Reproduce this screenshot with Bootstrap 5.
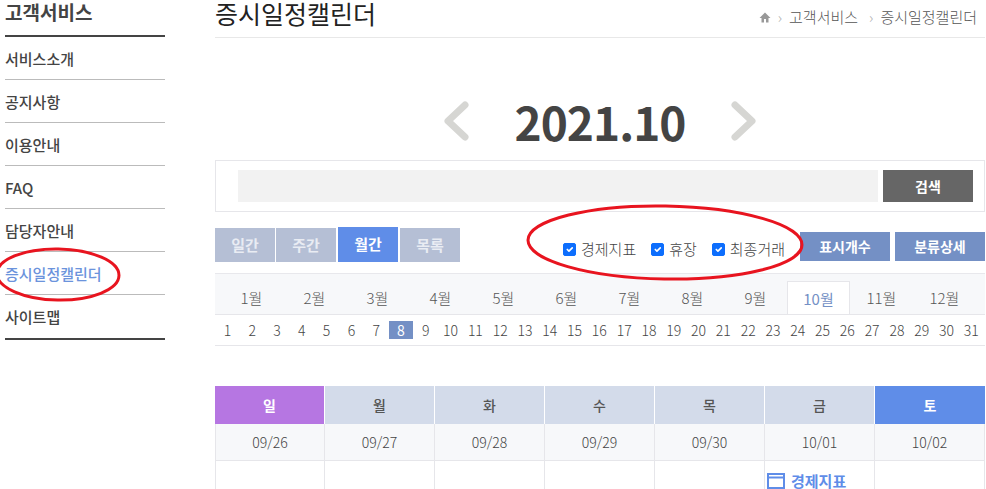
<!DOCTYPE html>
<html lang="ko">
<head>
<meta charset="UTF-8" />
<meta name="viewport" content="width=device-width, initial-scale=1.0"/>
<title>증시일정캘린더</title>
<link href="https://cdn.jsdelivr.net/npm/bootstrap@5.3.3/dist/css/bootstrap.min.css" rel="stylesheet">
<style>
    html, body { height: 489px; overflow: hidden; }
    body {
    background: #fff;
    color: #444;
    font-family: "Noto Sans CJK KR", "Noto Sans", sans-serif;
    position: relative;
    }
    .page-wrap { width: 986px; }
    .side-col { width: 160px; margin-left: 5px; margin-right: 50px; flex: none; }
    .main-col { width: 770px; flex: none; }
    .side-title { height: 37px; border-bottom: 2px solid #444; font-size: 19px; font-weight: 700; line-height: 23px; color: #444; margin: 0; }
    .side-list { border-bottom: 2px solid #444; border-radius: 0; }
    .side-list .list-group-item { height: 43px; padding: 0; line-height: 43px; font-size: 15px; font-weight: 500; color: #444; border: 0; border-bottom: 1px solid #bbb; background: none; border-radius: 0; }
    .side-list .list-group-item:last-child { border-bottom: 0; }
    .side-list .list-group-item.is-on { color: #6b93dc; }
    .title-bar { height: 38px; border-bottom: 1px solid #e8e8e8; }
    .title-bar h2 { font-size: 25px; font-weight: 400; color: #222; line-height: 27px; margin: 0; }
    .crumbs { font-size: 15px; font-weight: 300; color: #555; height: 34px; padding-right: 8px; gap: 7px; }
    .crumbs .crumb-sep { color: #aaa; }
    .year-row { height: 122px; padding-top: 53px; gap: 45px; }
    .year-row span { font-size: 46px; font-weight: 700; line-height: 60px; color: #444; width: 172px; text-align: center; letter-spacing: -1px; }
    .year-row svg { margin-top: 9px; }
    .search-box { height: 52px; border: 1px solid #e6e6ea; padding: 9px 11px 0 22px; gap: 5px; }
    .search-input { width: 640px; height: 32px; background: #f2f2f2; border: 0; border-radius: 0; }
    .search-btn { width: 90px; height: 32px; background: #666; color: #fff; font-size: 14px; font-weight: 700; border: 0; border-radius: 0; padding: 0; }
    .tool-row { height: 61px; padding-top: 16px; }
    .view-tabs { gap: 1px; }
    .view-btn { width: 60px; height: 34px; background: #b5bfd5; color: #e9ecf3; font-size: 15px; font-weight: 700; border: 0; border-radius: 0; padding: 0; }
    .view-btn.is-on { background: #5f8de8; color: #fff; margin: -1px 1px 0; height: 35px; }
    .chk-row { font-size: 15px; font-weight: 300; color: #444; margin-right: 10px; gap: 15px; height: 41px; }
    .chk-row .form-check { margin: 0; padding-left: 18px; min-height: 0; line-height: 20px; }
    .chk-row .form-check-input { width: 13px; height: 13px; margin: 4px 0 0 -18px; border-radius: 2px; }
    .opt-btn { width: 90px; height: 29px; background: #7490c5; color: #fff; font-size: 14px; font-weight: 700; border: 0; border-radius: 0; padding: 0; margin-top: 4px; margin-left: 5px; }
    .month-row { height: 42px; background: #f7f8fa; border-top: 1px solid #e8e8ec; border-bottom: 1px solid #e6e6ea; margin: 0; padding-left: 5px; flex-wrap: nowrap; }
    .month-row .nav-item { width: 63px; flex: none; text-align: center; }
    .month-row .nav-link { height: 33px; margin-top: 7px; padding: 0; line-height: 33px; font-size: 15px; font-weight: 300; color: #555; border: 0; border-radius: 0; background: none; }
    .month-row .nav-link.is-on { width: 63px; background: #fff; color: #7490c5; font-weight: 400; border: 1px solid #e6e6ea; border-bottom: 0; }
    .day-row { height: 31px; border-bottom: 1px solid #e6e6ea; font-size: 14px; font-weight: 300; color: #444; }
    .day-row span { width: 24.8px; height: 18px; margin-top: 6px; text-align: center; line-height: 18px; flex: none; }
    .day-row span.is-on { background: #7490c5; color: #fff; font-weight: 400; }
    .cal-table { margin: 40px 0 0; table-layout: fixed; width: 770px; border-collapse: separate; border-spacing: 0; }
    .cal-table th { height: 38px; padding: 0; vertical-align: middle; text-align: center; font-size: 14px; font-weight: 500; background: #d3dbea; color: #555; border: 0; border-right: 1px solid #fff; }
    .cal-table th:first-child { background: #b676e2; color: #fff; font-weight: 700; }
    .cal-table th:last-child { background: #5f8de8; color: #fff; font-weight: 700; border-right: 0; }
    .cal-table td { padding: 0; text-align: center; border: 0; border-right: 1px solid #e6e6ea; font-size: 14px; font-weight: 300; color: #444; }
    .cal-table td:first-child { border-left: 1px solid #e6e6ea; }
    .cal-table .date-row td { height: 37px; background: #f7f8fa; vertical-align: middle; border-bottom: 1px solid #e6e6ea; }
    .cal-table .event-row td { height: 28px; vertical-align: top; padding-top: 12px; }
    .event-tag { color: #5f8de8; font-size: 15px; font-weight: 700; padding-left: 2px; line-height: 16px; gap: 6px; }
    .red-mark { position: absolute; left: 0; top: 0; pointer-events: none; }
</style>
</head>
<body>
<div class="page-wrap d-flex">
    <aside class="side-col">
        <h5 class="side-title">고객서비스</h5>
        <div class="list-group side-list">
            <a href="#" class="list-group-item">서비스소개</a>
            <a href="#" class="list-group-item">공지사항</a>
            <a href="#" class="list-group-item">이용안내</a>
            <a href="#" class="list-group-item">FAQ</a>
            <a href="#" class="list-group-item">담당자안내</a>
            <a href="#" class="list-group-item is-on">증시일정캘린더</a>
            <a href="#" class="list-group-item">사이트맵</a>
        </div>
    </aside>

    <main class="main-col">
        <div class="title-bar d-flex justify-content-between">
            <h2>증시일정캘린더</h2>
            <div class="crumbs d-flex align-items-center">
                <svg width="12" height="11" viewBox="0 0 12 11"><path d="M6 0.5 0.5 6H2.5V10.5H5V7H7V10.5H9.5V6H11.5Z" fill="#999"/></svg>
                <span class="crumb-sep">›</span>
                <span>고객서비스</span>
                <span class="crumb-sep ms-1">›</span>
                <span>증시일정캘린더</span>
            </div>
        </div>

        <div class="year-row d-flex justify-content-center align-items-start">
            <svg width="26" height="42" viewBox="0 0 26 42"><path d="M22 5 5 21 22 37" fill="none" stroke="#d6d6d3" stroke-width="7" stroke-linecap="round" stroke-linejoin="round"/></svg>
            <span>2021.10</span>
            <svg width="26" height="42" viewBox="0 0 26 42"><path d="M4 5 21 21 4 37" fill="none" stroke="#d6d6d3" stroke-width="7" stroke-linecap="round" stroke-linejoin="round"/></svg>
        </div>

        <div class="search-box d-flex">
            <input class="form-control search-input" type="text">
            <button class="btn search-btn">검색</button>
        </div>

        <div class="tool-row d-flex justify-content-between">
            <div class="view-tabs d-flex">
                <button class="btn view-btn">일간</button>
                <button class="btn view-btn">주간</button>
                <button class="btn view-btn is-on">월간</button>
                <button class="btn view-btn">목록</button>
            </div>
            <div class="d-flex">
                <div class="chk-row d-flex align-items-center">
                    <div class="form-check"><input class="form-check-input" type="checkbox" id="c1" checked><label class="form-check-label" for="c1">경제지표</label></div>
                    <div class="form-check"><input class="form-check-input" type="checkbox" id="c2" checked><label class="form-check-label" for="c2">휴장</label></div>
                    <div class="form-check"><input class="form-check-input" type="checkbox" id="c3" checked><label class="form-check-label" for="c3">최종거래</label></div>
                </div>
                <button class="btn opt-btn">표시개수</button>
                <button class="btn opt-btn">분류상세</button>
            </div>
        </div>

        <ul class="nav month-row" id="months"></ul>
        <div class="day-row d-flex" id="days"></div>

        <table class="table cal-table">
            <thead>
                <tr><th>일</th><th>월</th><th>화</th><th>수</th><th>목</th><th>금</th><th>토</th></tr>
            </thead>
            <tbody>
                <tr class="date-row"><td>09/26</td><td>09/27</td><td>09/28</td><td>09/29</td><td>09/30</td><td>10/01</td><td>10/02</td></tr>
                <tr class="event-row">
                    <td></td><td></td><td></td><td></td><td></td>
                    <td>
                        <div class="event-tag d-flex align-items-center">
                            <svg width="18" height="16" viewBox="0 0 18 16"><rect x="1" y="1" width="16" height="14" fill="none" stroke="#5f8de8" stroke-width="2"/><path d="M1 4.5H17" stroke="#5f8de8" stroke-width="2"/><path d="M4 2.5H6M8 2.5H10M12 2.5H14" stroke="#fff" stroke-width="1"/></svg>
                            <span>경제지표</span>
                        </div>
                    </td>
                    <td></td>
                </tr>
            </tbody>
        </table>
    </main>
</div>

<svg class="red-mark" width="986" height="489" viewBox="0 0 986 489">
    <ellipse cx="58" cy="274.5" rx="61" ry="25.5" fill="none" stroke="#e8141f" stroke-width="3" transform="rotate(1 58 274)"/>
    <ellipse cx="665" cy="242.5" rx="137" ry="36.5" fill="none" stroke="#e8141f" stroke-width="3" transform="rotate(1 665 242)"/>
</svg>

<script>
    const months = document.getElementById('months');
    for (let m = 1; m <= 12; m++) {
        const on = m === 10 ? ' is-on' : '';
        months.innerHTML += `<li class="nav-item"><a class="nav-link${on}" href="#">${m}월</a></li>`;
    }
    const days = document.getElementById('days');
    for (let d = 1; d <= 31; d++) {
        const on = d === 8 ? ' class="is-on"' : '';
        days.innerHTML += `<span${on}>${d}</span>`;
    }
</script>
<script src="https://cdn.jsdelivr.net/npm/bootstrap@5.3.3/dist/js/bootstrap.bundle.min.js"></script>
</body>
</html>
